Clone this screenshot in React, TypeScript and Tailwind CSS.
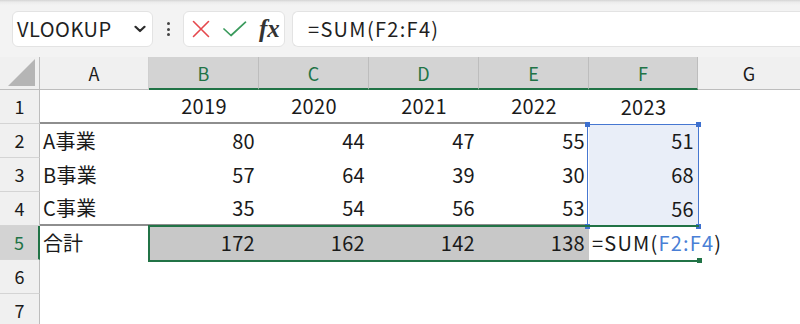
import React from "react";

const FONT = "font-['Noto_Sans_CJK_JP','Noto_Sans',sans-serif]";

type Cell = { text?: string; align?: "left" | "right" | "center" };

const data: { label: string; cells: Cell[] }[] = [
  {
    label: "1",
    cells: [
      { text: "" },
      { text: "2019", align: "center" },
      { text: "2020", align: "center" },
      { text: "2021", align: "center" },
      { text: "2022", align: "center" },
      { text: "2023", align: "center" },
    ],
  },
  {
    label: "2",
    cells: [
      { text: "A事業", align: "left" },
      { text: "80", align: "right" },
      { text: "44", align: "right" },
      { text: "47", align: "right" },
      { text: "55", align: "right" },
      { text: "51", align: "right" },
    ],
  },
  {
    label: "3",
    cells: [
      { text: "B事業", align: "left" },
      { text: "57", align: "right" },
      { text: "64", align: "right" },
      { text: "39", align: "right" },
      { text: "30", align: "right" },
      { text: "68", align: "right" },
    ],
  },
  {
    label: "4",
    cells: [
      { text: "C事業", align: "left" },
      { text: "35", align: "right" },
      { text: "54", align: "right" },
      { text: "56", align: "right" },
      { text: "53", align: "right" },
      { text: "56", align: "right" },
    ],
  },
];

const alignCls = (a?: string) =>
  a === "right" ? "justify-end pr-[4px]" : a === "center" ? "justify-center" : "justify-start pl-[3px]";

function FormulaBar() {
  return (
    <div className="h-[57px] flex items-start pt-[11px] pl-[12px] bg-[linear-gradient(to_bottom,#d4d4d4_0px,#ebebeb_2px,#f3f3f3_5px)]">
      <div className="w-[141px] h-[36px] bg-white border border-[#e3e3e3] rounded-[6px] flex items-center pl-[4px] pr-[6px]">
        <span className="text-[20px] text-[#1f1f1f] leading-none tracking-[0.5px]">VLOOKUP</span>
        <svg className="ml-auto" width="12" height="8" viewBox="0 0 12 8">
          <path d="M1.5 1.8 L6 6 L10.5 1.8" fill="none" stroke="#2b2b2b" strokeWidth="2.2" strokeLinecap="round" strokeLinejoin="round" />
        </svg>
      </div>
      <div className="w-[30px] h-[36px] flex flex-col items-center justify-center gap-[2.5px]">
        <div className="w-[3px] h-[3px] rounded-full bg-[#444]" />
        <div className="w-[3px] h-[3px] rounded-full bg-[#444]" />
        <div className="w-[3px] h-[3px] rounded-full bg-[#444]" />
      </div>
      <div className="w-[102px] h-[36px] bg-white border border-[#e3e3e3] rounded-[6px] flex items-center pl-[8px]">
        <svg width="18" height="18" viewBox="0 0 18 18">
          <path d="M1.5 1.5 L16.5 16.5 M16.5 1.5 L1.5 16.5" stroke="#e5484d" strokeWidth="1.6" strokeLinecap="round" />
        </svg>
        <svg className="ml-[13px]" width="24" height="16" viewBox="0 0 24 16">
          <path d="M1 8 L8 14.5 L22.5 1.2" fill="none" stroke="#3a9a5c" strokeWidth="1.7" strokeLinecap="round" strokeLinejoin="round" />
        </svg>
        <span className="ml-[12px] font-['Liberation_Serif',serif] italic font-bold text-[25px] leading-none text-[#333] mt-[-2px]">fx</span>
      </div>
      <div className="ml-[7px] flex-1 h-[36px] bg-white border border-[#e3e3e3] border-r-0 rounded-l-[6px] flex items-center pl-[15px]">
        <span className="text-[20px] text-[#1f1f1f] leading-none tracking-[1.3px]">=SUM(F2:F4)</span>
      </div>
    </div>
  );
}

export default function App() {
  const colLetters = ["B", "C", "D", "E", "F"];
  const row5 = ["172", "162", "142", "138"];
  return (
    <div className={`w-[800px] h-[324px] overflow-hidden bg-white relative ${FONT}`}>
      <FormulaBar />
      <div className="relative grid grid-cols-[40px_109px_110px_110px_110px_110px_109px_102px] grid-rows-[33px_repeat(7,34px)] text-[#1a1a1a]">
        {/* header row */}
        <div className="bg-[#f0f0f0] border-r border-b border-[#bdbdbd] flex items-end justify-end pr-[3px] pb-[3px]">
          <svg width="28" height="27" viewBox="0 0 28 27">
            <path d="M27 0 L27 27 L0 27 Z" fill="#b5b5b5" />
          </svg>
        </div>
        <div className="bg-[#f0f0f0] border-r border-b border-[#cfcfcf] border-b-[#bdbdbd] flex items-center justify-center text-[18px]">A</div>
        {colLetters.map((c) => (
          <div
            key={c}
            className="bg-[#d3d3d3] border-r border-[#bdbdbd] border-b-2 border-b-[#217346] flex items-center justify-center text-[18px] text-[#217346] pt-[1px]"
          >
            {c}
          </div>
        ))}
        <div className="bg-[#f0f0f0] border-b border-[#bdbdbd] flex items-center justify-center text-[18px]">G</div>

        {/* rows 1-4 */}
        {data.map((r, ri) => (
          <React.Fragment key={r.label}>
            <div className="bg-[#f0f0f0] border-r border-b border-r-[#bdbdbd] border-b-[#d4d4d4] flex items-center justify-center text-[18px]">
              {r.label}
            </div>
            {r.cells.map((c, ci) => {
              const bottom = (ri === 0 || ri === 3) && ci < 5 ? "border-b-2 border-b-[#8e8e8e]" : "";
              const fSel = ci === 5 && ri > 0 ? "bg-[#e9eef8]" : "";
              return (
                <div key={ci} className={`flex items-center text-[20px] tracking-[0.3px] ${alignCls(c.align)} ${bottom} ${fSel}`}>
                  {c.text}
                </div>
              );
            })}
            <div />
          </React.Fragment>
        ))}

        {/* row 5 */}
        <div className="bg-[#d3d3d3] border-r-2 border-r-[#217346] border-b border-b-[#d4d4d4] flex items-center justify-center text-[18px] text-[#217346]">
          5
        </div>
        <div className="flex items-center text-[20px] justify-start pl-[3px]">合計</div>
        {row5.map((v) => (
          <div key={v} className="bg-[#c8c8c8] flex items-center justify-end pr-[4px] text-[20px] tracking-[0.3px]">
            {v}
          </div>
        ))}
        <div className="flex items-center text-[20px] pl-[3px] whitespace-nowrap tracking-[1.2px]">
          <span>=SUM(</span>
          <span className="text-[#4a7fd6]">F2:F4</span>
          <span>)</span>
          <span className="ml-[1px] w-px h-[28px] bg-[#555]" />
        </div>
        <div />

        {/* rows 6, 7 */}
        {["6", "7"].map((l) => (
          <React.Fragment key={l}>
            <div className="bg-[#f0f0f0] border-r border-b border-r-[#bdbdbd] border-b-[#d4d4d4] flex items-center justify-center text-[18px]">
              {l}
            </div>
            <div />
            <div />
            <div />
            <div />
            <div />
            <div />
            <div />
          </React.Fragment>
        ))}

        {/* overlay: blue reference box F2:F4 */}
        <div className="absolute left-[587px] top-[67px] w-[112px] h-[103px] border border-[#4677d1] pointer-events-none">
          <div className="absolute -left-[3px] -top-[3px] w-[5px] h-[5px] bg-[#3d70cf]" />
          <div className="absolute -right-[3px] -top-[3px] w-[5px] h-[5px] bg-[#3d70cf]" />
          <div className="absolute -left-[3px] -bottom-[3px] w-[5px] h-[5px] bg-[#3d70cf]" />
          <div className="absolute -right-[3px] -bottom-[3px] w-[5px] h-[5px] bg-[#3d70cf]" />
        </div>

        {/* overlay: green selection B5:F5 */}
        <div className="absolute left-[148px] top-[168px] w-[551px] h-[37px] border-2 border-r-0 border-[#217346] pointer-events-none">
          <div className="absolute right-[-3px] bottom-[-3px] w-[5px] h-[5px] bg-[#217346]" />
        </div>
      </div>
    </div>
  );
}
